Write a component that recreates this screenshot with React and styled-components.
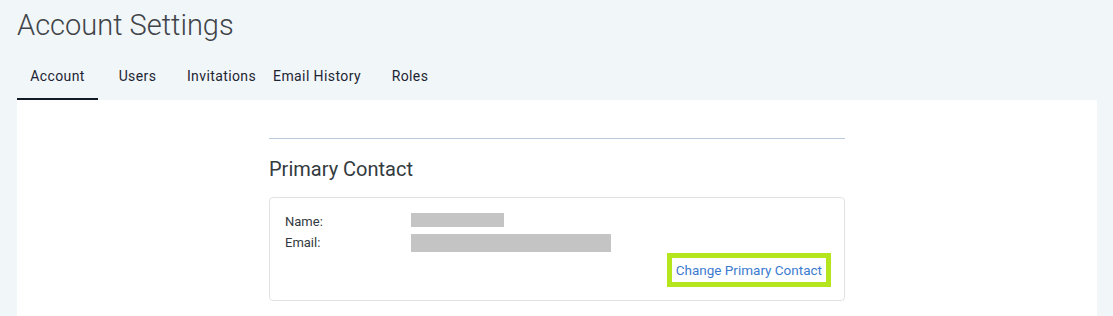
import React from 'react';
import styled, { createGlobalStyle } from 'styled-components';

const GlobalStyle = createGlobalStyle`
    body {
        margin: 0;
        background-color: #f1f6f9;
        font-family: Roboto, 'Liberation Sans', sans-serif;
    }
`;

const Page = styled.div`
    padding: 7px 16px 0 17px;
`;

const Title = styled.h1`
    color: #3f4448;
    font-size: 29px;
    font-weight: 300;
    line-height: 36px;
    margin: 0 0 13px;
`;

const TabBar = styled.nav`
    display: flex;
`;

const Tab = styled.div`
    border-bottom: 2px solid ${(props) => (props.active ? '#121a27' : 'transparent')};
    color: #1d2433;
    font-size: 14px;
    letter-spacing: 0.4px;
    line-height: 20px;
    padding: 10px 0 12px;
    text-align: center;
    white-space: nowrap;
    width: ${(props) => props.w}px;
`;

const Panel = styled.div`
    background-color: #fff;
    display: flex;
    justify-content: center;
    min-height: 216px;
`;

const Column = styled.section`
    padding-top: 38px;
    width: 576px;
`;

const Divider = styled.hr`
    border: none;
    border-top: 1px solid #bccadd;
    margin: 0;
`;

const SectionTitle = styled.h2`
    color: #333a40;
    font-size: 20px;
    font-weight: 400;
    line-height: 28px;
    margin: 16px 0 14px;
`;

const Card = styled.div`
    border: 1px solid #e0e3e6;
    border-radius: 4px;
    padding: 13px 13px 13px 15px;
`;

const InfoRow = styled.div`
    display: grid;
    grid-template-columns: 126px 1fr;
    height: 21px;
`;

const Label = styled.span`
    color: #333a40;
    font-size: 13px;
    line-height: 21px;
`;

const Redacted = styled.div`
    background-color: #c4c4c4;
    height: ${(props) => props.h}px;
    margin-top: 2px;
    width: ${(props) => props.w}px;
`;

const Actions = styled.div`
    display: flex;
    justify-content: flex-end;
`;

const LinkButton = styled.a`
    border: 5px solid #b5e61d;
    color: #3d7bd0;
    font-size: 13.5px;
    line-height: 24px;
    padding: 0 4px;
    text-decoration: none;
`;

const tabs = [
    { label: 'Account', w: 81, active: true },
    { label: 'Users', w: 79 },
    { label: 'Invitations', w: 89 },
    { label: 'Email History', w: 102 },
    { label: 'Roles', w: 84 },
];

const App = () => (
    <>
        <GlobalStyle />
        <Page>
            <Title>Account Settings</Title>
            <TabBar>
                {tabs.map((t) => (
                    <Tab key={t.label} w={t.w} active={t.active}>{t.label}</Tab>
                ))}
            </TabBar>
            <Panel>
                <Column>
                    <Divider />
                    <SectionTitle>Primary Contact</SectionTitle>
                    <Card>
                        <InfoRow>
                            <Label>Name:</Label>
                            <Redacted w={93} h={14} />
                        </InfoRow>
                        <InfoRow>
                            <Label>Email:</Label>
                            <Redacted w={200} h={18} />
                        </InfoRow>
                        <Actions>
                            <LinkButton href="#">Change Primary Contact</LinkButton>
                        </Actions>
                    </Card>
                </Column>
            </Panel>
        </Page>
    </>
);

export default App;
